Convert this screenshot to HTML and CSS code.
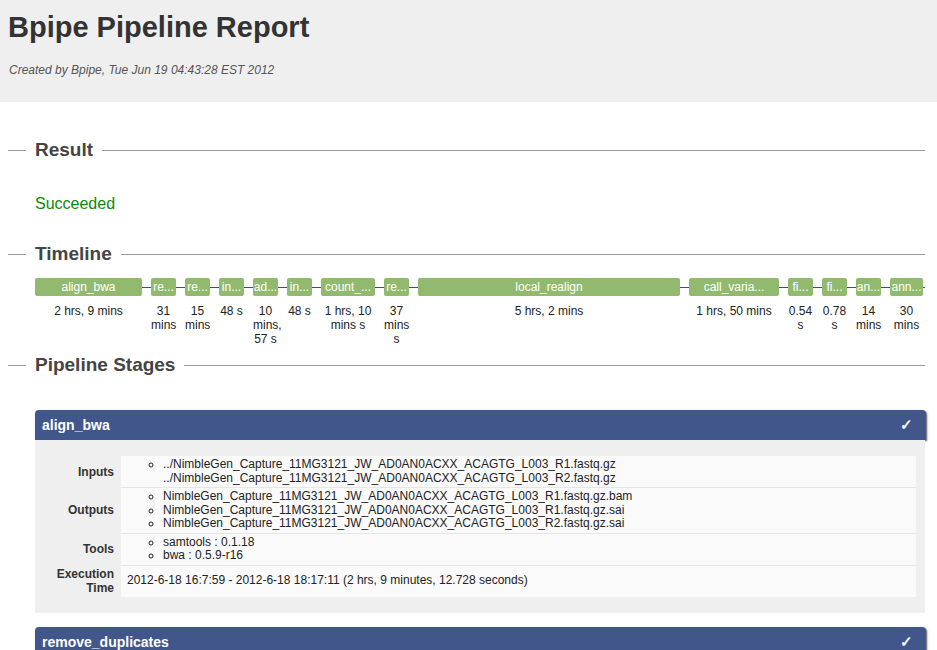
FILE: index.html
```html
<!DOCTYPE html>
<html>
<head>
<meta charset="utf-8">
<title>Bpipe Pipeline Report</title>
<link rel="stylesheet" href="styles.css">
</head>
<body>
<header class="page-header">
  <h1 class="title">Bpipe Pipeline Report</h1>
  <p class="created">Created by Bpipe, Tue Jun 19 04:43:28 EST 2012</p>
</header>

<section class="section section-result">
  <h2 class="sec-title">Result</h2>
  <div class="sec-body">
    <p class="status">Succeeded</p>
  </div>
</section>

<section class="section section-timeline">
  <h2 class="sec-title">Timeline</h2>
  <div class="sec-body">
    <div class="timeline">
      <div class="tl-cell" style="width:107px"><div class="tl-bar">align_bwa</div><div class="tl-label">2 hrs, 9 mins</div></div>
      <div class="tl-cell" style="width:25px"><div class="tl-bar">re...</div><div class="tl-label">31 mins</div></div>
      <div class="tl-cell" style="width:25px"><div class="tl-bar">re...</div><div class="tl-label">15 mins</div></div>
      <div class="tl-cell" style="width:25px"><div class="tl-bar">in...</div><div class="tl-label">48 s</div></div>
      <div class="tl-cell" style="width:25px"><div class="tl-bar">ad...</div><div class="tl-label">10 mins, 57 s</div></div>
      <div class="tl-cell" style="width:25px"><div class="tl-bar">in...</div><div class="tl-label">48 s</div></div>
      <div class="tl-cell" style="width:54px"><div class="tl-bar">count_...</div><div class="tl-label">1 hrs, 10 mins s</div></div>
      <div class="tl-cell" style="width:25px"><div class="tl-bar">re...</div><div class="tl-label">37 mins s</div></div>
      <div class="tl-cell" style="width:262px"><div class="tl-bar">local_realign</div><div class="tl-label">5 hrs, 2 mins</div></div>
      <div class="tl-cell" style="width:90px"><div class="tl-bar">call_varia...</div><div class="tl-label">1 hrs, 50 mins</div></div>
      <div class="tl-cell" style="width:25px"><div class="tl-bar">fi...</div><div class="tl-label">0.54 s</div></div>
      <div class="tl-cell" style="width:25px"><div class="tl-bar">fi...</div><div class="tl-label">0.78 s</div></div>
      <div class="tl-cell" style="width:25px"><div class="tl-bar">an...</div><div class="tl-label">14 mins</div></div>
      <div class="tl-cell" style="width:33px"><div class="tl-bar">ann...</div><div class="tl-label">30 mins</div></div>
    </div>
  </div>
</section>

<section class="section section-stages">
  <h2 class="sec-title">Pipeline Stages</h2>
  <div class="sec-body stages">
    <div class="stage">
      <div class="stage-head"><span class="stage-name">align_bwa</span><span class="stage-ok">✓</span></div>
      <div class="stage-body">
        <table class="stage-table">
          <tr>
            <th>Inputs</th>
            <td><ul><li>../NimbleGen_Capture_11MG3121_JW_AD0AN0ACXX_ACAGTG_L003_R1.fastq.gz<br>../NimbleGen_Capture_11MG3121_JW_AD0AN0ACXX_ACAGTG_L003_R2.fastq.gz</li></ul></td>
          </tr>
          <tr>
            <th>Outputs</th>
            <td><ul>
              <li>NimbleGen_Capture_11MG3121_JW_AD0AN0ACXX_ACAGTG_L003_R1.fastq.gz.bam</li>
              <li>NimbleGen_Capture_11MG3121_JW_AD0AN0ACXX_ACAGTG_L003_R1.fastq.gz.sai</li>
              <li>NimbleGen_Capture_11MG3121_JW_AD0AN0ACXX_ACAGTG_L003_R2.fastq.gz.sai</li>
            </ul></td>
          </tr>
          <tr>
            <th>Tools</th>
            <td><ul>
              <li>samtools : 0.1.18</li>
              <li>bwa : 0.5.9-r16</li>
            </ul></td>
          </tr>
          <tr>
            <th>Execution Time</th>
            <td class="plain">2012-6-18 16:7:59 - 2012-6-18 18:17:11 (2 hrs, 9 minutes, 12.728 seconds)</td>
          </tr>
        </table>
      </div>
    </div>
    <div class="stage">
      <div class="stage-head"><span class="stage-name">remove_duplicates</span><span class="stage-ok">✓</span></div>
    </div>
  </div>
</section>
</body>
</html>
```

FILE: styles.css
```css
html, body {
  margin: 0;
  padding: 0;
  background: #fff;
}
body {
  font-family: "Liberation Sans", Arial, Helvetica, sans-serif;
  color: #222;
  font-size: 12px;
}
.page-header {
  background: #efefef;
  padding: 11px 8px 25px 8px;
}
.title {
  margin: 0;
  font-size: 29px;
  line-height: 33px;
  font-weight: bold;
  color: #333;
}
.created {
  margin: 19px 0 0 1px;
  font-size: 12px;
  line-height: 14px;
  font-style: italic;
  color: #555;
}
.section {
  padding: 0 12px 0 8px;
}
.sec-title {
  display: flex;
  align-items: center;
  margin: 0;
  font-size: 19px;
  line-height: 24px;
  font-weight: bold;
  color: #444;
}
.sec-title::before {
  content: "";
  width: 18px;
  height: 1px;
  background: #999;
  margin-right: 9px;
}
.sec-title::after {
  content: "";
  flex: 1;
  height: 1px;
  background: #999;
  margin-left: 9px;
}
.sec-body {
  padding-left: 27px;
}
.section-result {
  margin-top: 36px;
}
.status {
  margin: 32px 0 0 0;
  font-size: 16px;
  line-height: 20px;
  color: #0a8a0a;
}
.section-timeline {
  margin-top: 28px;
}
.timeline {
  display: flex;
  gap: 9px;
  margin-top: 12px;
  background: linear-gradient(#3d4d8a, #3d4d8a) no-repeat 0 9px / 100% 1px;
}
.tl-cell {
  flex: none;
  display: flex;
  flex-direction: column;
}
.tl-bar {
  height: 18px;
  line-height: 18px;
  background: #91ba6f;
  border-radius: 2px;
  color: #fff;
  font-size: 12px;
  text-align: center;
  white-space: nowrap;
  overflow: hidden;
  text-overflow: ellipsis;
  padding: 0;
}
.tl-label {
  margin-top: 8px;
  text-align: center;
  font-size: 12px;
  line-height: 14px;
  color: #222;
}
.section-stages {
  margin-top: 7px;
}
.stages {
  padding-top: 33px;
  padding-bottom: 20px;
}
.stage {
  margin-right: -1px;
  margin-bottom: 14px;
}
.stage-head {
  display: flex;
  justify-content: space-between;
  align-items: center;
  height: 30px;
  padding: 0 13px 0 7px;
  background: #41568a;
  border-radius: 4px 4px 0 0;
  box-shadow: 1px 1px 2px #555;
  color: #fff;
  font-size: 14px;
  font-weight: bold;
}
.stage-ok {
  font-size: 15px;
}
.stage-body {
  background: #efefef;
  padding: 16px 9px 16px 9px;
  margin-right: 1px;
}
.stage-table {
  width: 100%;
  border-collapse: collapse;
}
.stage-table th {
  width: 70px;
  padding: 2px 7px 2px 0;
  text-align: right;
  vertical-align: middle;
  font-size: 12px;
  line-height: 14px;
  font-weight: bold;
  color: #333;
}
.stage-table td {
  background: #fafafa;
  border-bottom: 1px solid #e6e6e6;
  padding: 2px 6px;
  font-size: 12px;
  line-height: 13.5px;
  color: #222;
  vertical-align: middle;
}
.stage-table tr:last-child td {
  border-bottom: none;
}
.stage-table ul {
  margin: 0;
  padding-left: 36px;
  list-style-type: circle;
}
.stage-table td.plain {
  padding-top: 7px;
  padding-bottom: 8px;
}
```
